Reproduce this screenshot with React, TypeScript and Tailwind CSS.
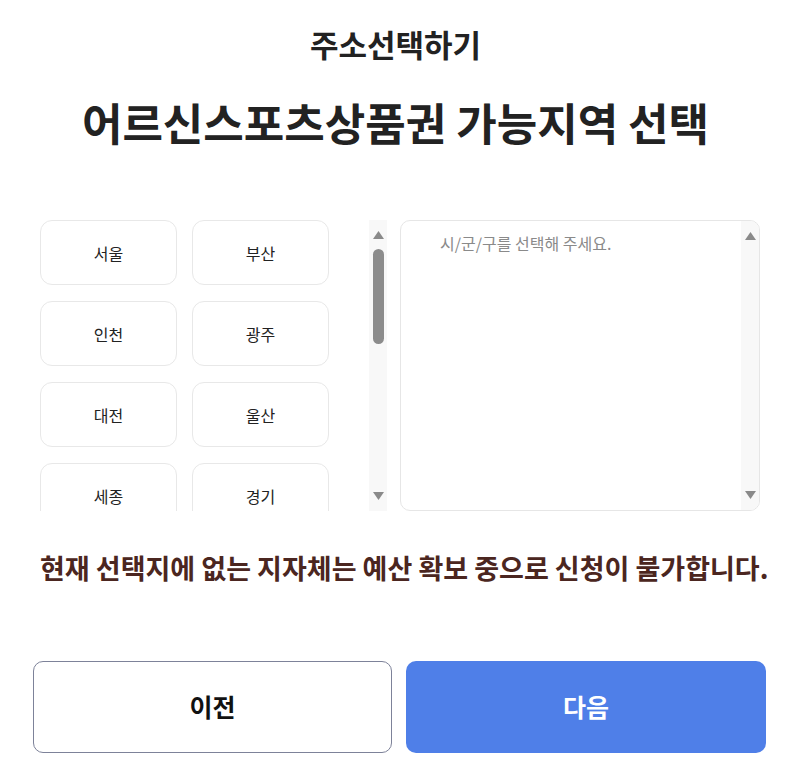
const sidos = ['서울', '부산', '인천', '광주', '대전', '울산', '세종', '경기'];

function ArrowUp() {
  return (
    <svg width="13" height="10" viewBox="0 0 13 10" className="block">
      <path d="M6.5 1 L12 9 L1 9 Z" fill="#8a8a8a" />
    </svg>
  );
}

function ArrowDown() {
  return (
    <svg width="13" height="10" viewBox="0 0 13 10" className="block">
      <path d="M1 1 L12 1 L6.5 9 Z" fill="#8a8a8a" />
    </svg>
  );
}

function ScrollBar({ thumb }: { thumb: boolean }) {
  return (
    <div className="w-[18px] shrink-0 bg-[#f8f8f8] flex flex-col items-center py-[10px]">
      <ArrowUp />
      <div className="flex-1 w-full flex flex-col items-center pt-[9px]">
        {thumb && <div className="w-[11px] h-[95px] rounded-full bg-[#8c8c8c]" />}
      </div>
      <ArrowDown />
    </div>
  );
}

export default function App() {
  return (
    <div className="w-[791px] h-[768px] bg-white text-[#222] font-['Noto_Sans_CJK_KR','Noto_Sans',sans-serif] overflow-hidden">
      <h1 className="pt-[24px] text-center text-[31px] leading-[40px] font-bold text-[#222]">주소선택하기</h1>
      <h2 className="mt-[28px] text-center text-[44px] leading-[60px] font-bold text-[#222]">
        어르신스포츠상품권 가능지역 선택
      </h2>

      <div className="mt-[68px] ml-[40px] flex gap-[13px]">
        <div className="w-[347px] h-[291px] flex overflow-hidden">
          <div className="flex-1 overflow-hidden">
            <div className="grid grid-cols-[137px_137px] gap-x-[15px] gap-y-4">
              {sidos.map((s) => (
                <button
                  key={s}
                  className="h-[65px] rounded-xl border border-[#e8e8e8] bg-white text-[16px] font-normal text-[#222]"
                >
                  {s}
                </button>
              ))}
            </div>
          </div>
          <ScrollBar thumb />
        </div>

        <div className="w-[360px] h-[291px] flex rounded-[10px] border border-[#e6e6e6] overflow-hidden">
          <div className="flex-1 pl-[39px] pt-[10px] text-[16px] leading-[24px] text-[#8a8a8a]">
            시/군/구를 선택해 주세요.
          </div>
          <ScrollBar thumb={false} />
        </div>
      </div>

      <p className="mt-[39px] ml-[40px] text-[27px] leading-[36px] font-bold whitespace-nowrap text-[#4b2620]">
        현재 선택지에 없는 지자체는 예산 확보 중으로 신청이 불가합니다.
      </p>

      <div className="mt-[75px] ml-[33px] flex gap-[14px]">
        <button className="w-[359px] h-[92px] rounded-[10px] border border-[#7d8299] bg-white text-[25px] font-bold text-[#111]">
          이전
        </button>
        <button className="w-[360px] h-[92px] rounded-[10px] bg-[#4f7fe8] text-[25px] font-bold text-white">
          다음
        </button>
      </div>
    </div>
  );
}
